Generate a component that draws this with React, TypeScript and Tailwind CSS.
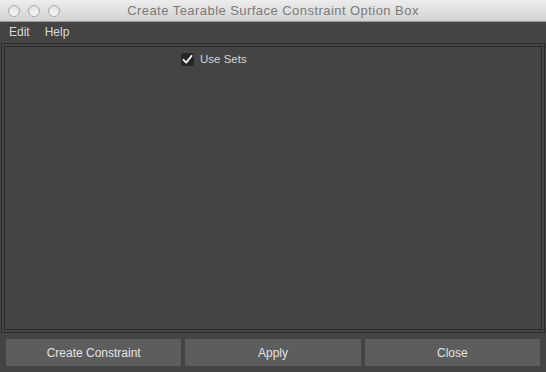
import React from 'react';

const App: React.FC = () => {
  return (
    <div className="w-[546px] h-[372px] flex flex-col bg-[#444444] overflow-hidden font-['Liberation_Sans',sans-serif]">
      {/* Title bar */}
      <div className="relative h-[22px] flex items-center justify-center bg-gradient-to-b from-[#ededed] to-[#d3d3d3] border-b border-[#9a9a9a]">
        <div className="absolute left-[8px] top-[5px] flex gap-[8px]">
          <div className="w-[12px] h-[12px] rounded-full border border-[#a8a8a8] bg-gradient-to-b from-[#e0e0e0] to-[#f6f6f6]" />
          <div className="w-[12px] h-[12px] rounded-full border border-[#a8a8a8] bg-gradient-to-b from-[#e0e0e0] to-[#f6f6f6]" />
          <div className="w-[12px] h-[12px] rounded-full border border-[#a8a8a8] bg-gradient-to-b from-[#e0e0e0] to-[#f6f6f6]" />
        </div>
        <span className="text-[13px] text-[#7a7a7a] tracking-[0.45px]">Create Tearable Surface Constraint Option Box</span>
      </div>

      {/* Menu bar */}
      <div className="h-[20px] flex items-center gap-[15px] px-[9px] text-[12px] text-[#d8d8d8]">
        <span>Edit</span>
        <span>Help</span>
      </div>

      {/* Options frame */}
      <div className="flex-1 mx-[1px] mt-[1px] border border-[#2a2a2a] p-[2px]">
        <div className="h-full border border-[#2a2a2a]">
          <div className="flex items-center pl-[176px] pt-[4px] gap-[6px]">
            <div className="w-[13px] h-[13px] rounded-[2px] bg-[#262626] flex items-center justify-center">
              <svg width="11" height="11" viewBox="0 0 11 11">
                <path d="M1.5 5.8 L4.2 8.6 L9.6 1.8" fill="none" stroke="#f2f2f2" strokeWidth="1.9" strokeLinecap="round" strokeLinejoin="round" />
              </svg>
            </div>
            <span className="text-[11.5px] text-[#d4d4d4]">Use Sets</span>
          </div>
        </div>
      </div>

      {/* Buttons */}
      <div className="h-[39px] flex gap-[4px] px-[6px] pt-[6px] pb-[6px] text-[12px] text-[#e2e2e2]">
        <button className="flex-1 bg-[#5d5d5d] flex items-center justify-center">Create Constraint</button>
        <button className="flex-1 bg-[#5d5d5d] flex items-center justify-center">Apply</button>
        <button className="flex-1 bg-[#5d5d5d] flex items-center justify-center">Close</button>
      </div>
    </div>
  );
};

export default App;
